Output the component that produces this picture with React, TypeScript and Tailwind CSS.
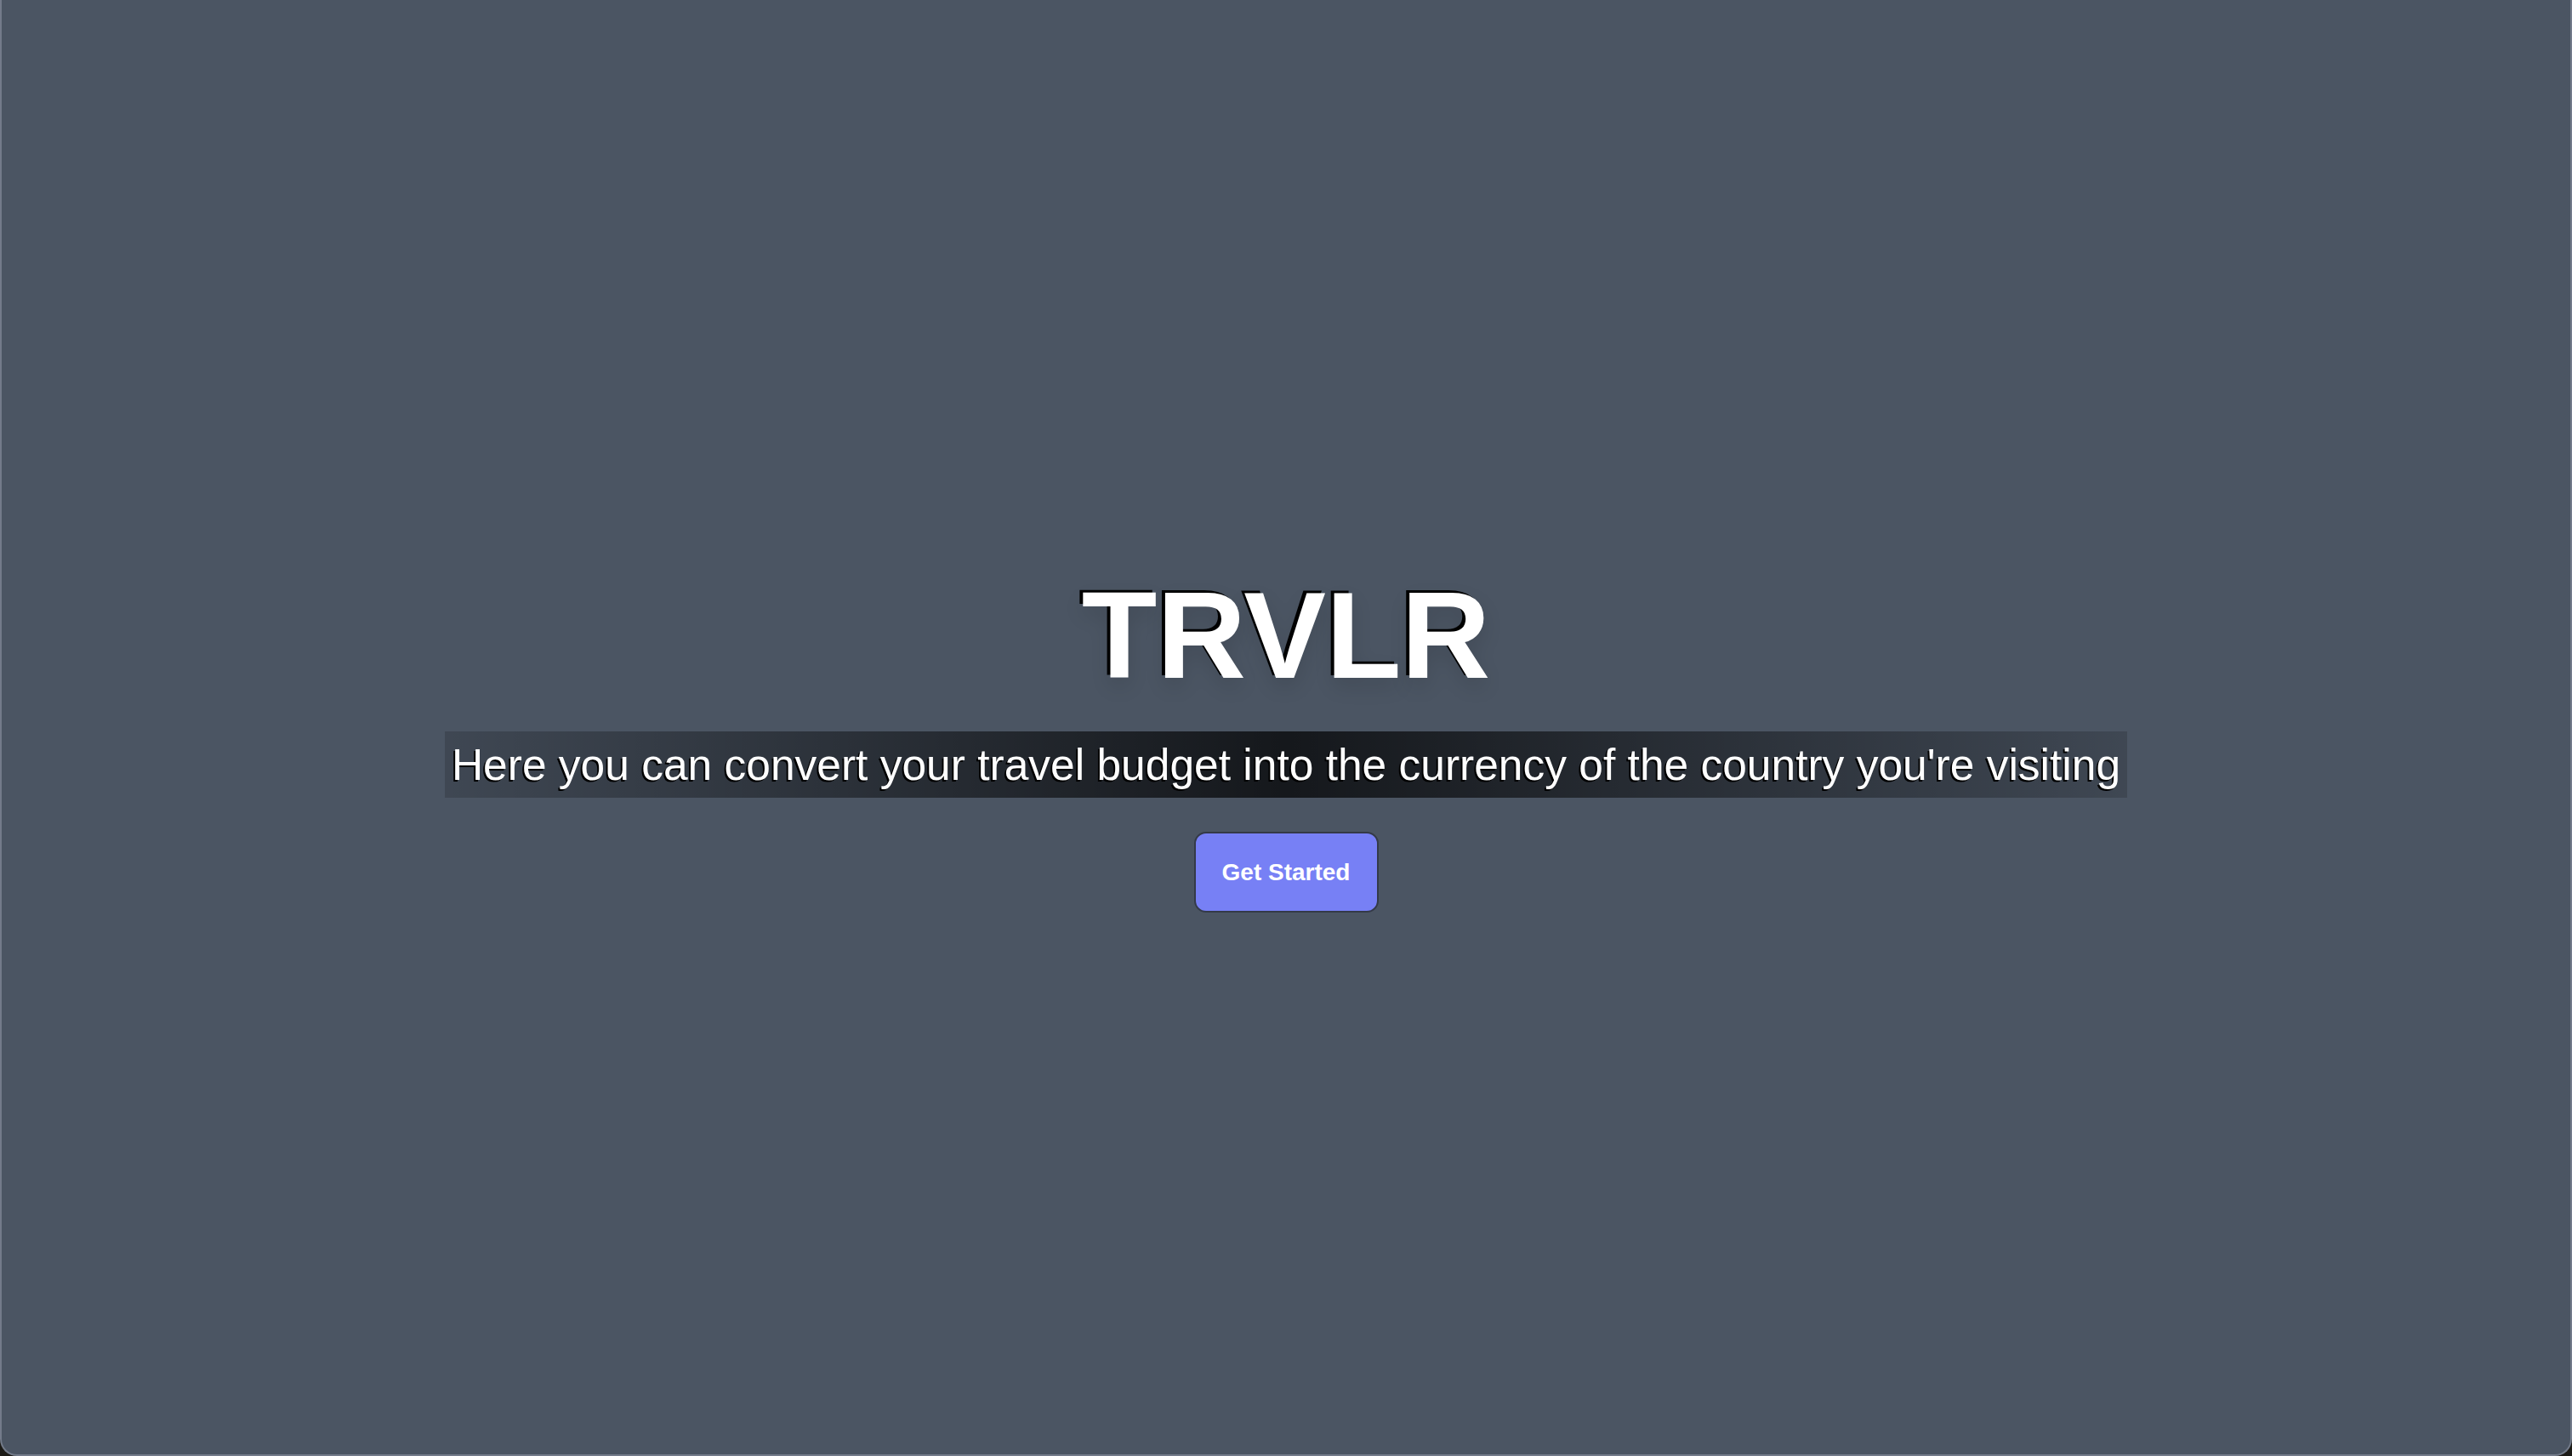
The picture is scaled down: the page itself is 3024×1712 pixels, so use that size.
import React from 'react'

function Hero() {
  return (
    <div className="flex flex-col items-center pt-[38px]">
      <h1
        className="font-bold text-white text-[145px] leading-none [text-shadow:-4px_-3px_0_#000,0_10px_24px_rgba(0,0,0,0.12)]"
        style={{ fontFamily: '"Liberation Sans", Arial, sans-serif' }}
      >
        TRVLR
      </h1>
      <p
        className="mt-10 h-[78px] px-[8px] text-[51.5px] leading-[78px] text-white bg-[linear-gradient(to_right,rgba(0,0,0,0.16),rgba(0,0,0,0.72),rgba(0,0,0,0.16))] [text-shadow:-2px_2px_0_#000]"
        style={{ fontFamily: '"Liberation Sans", Arial, sans-serif' }}
      >
        Here you can convert your travel budget into the currency of the country you're visiting
      </p>
      <button
        className="mt-10 w-[217px] h-[95px] rounded-[14px] border-2 border-[#343a48] bg-[#7780f5] text-white font-bold text-[28px]"
        style={{ fontFamily: '"Liberation Sans", Arial, sans-serif' }}
      >
        Get Started
      </button>
    </div>
  )
}

export default function App() {
  return (
    <div className="h-screen w-full bg-[#1c1b17]">
      <div className="h-full w-full flex flex-col justify-center rounded-b-[20px] border-2 border-t-0 border-[#737b8a] bg-[#4b5563]">
        <Hero />
      </div>
    </div>
  )
}
